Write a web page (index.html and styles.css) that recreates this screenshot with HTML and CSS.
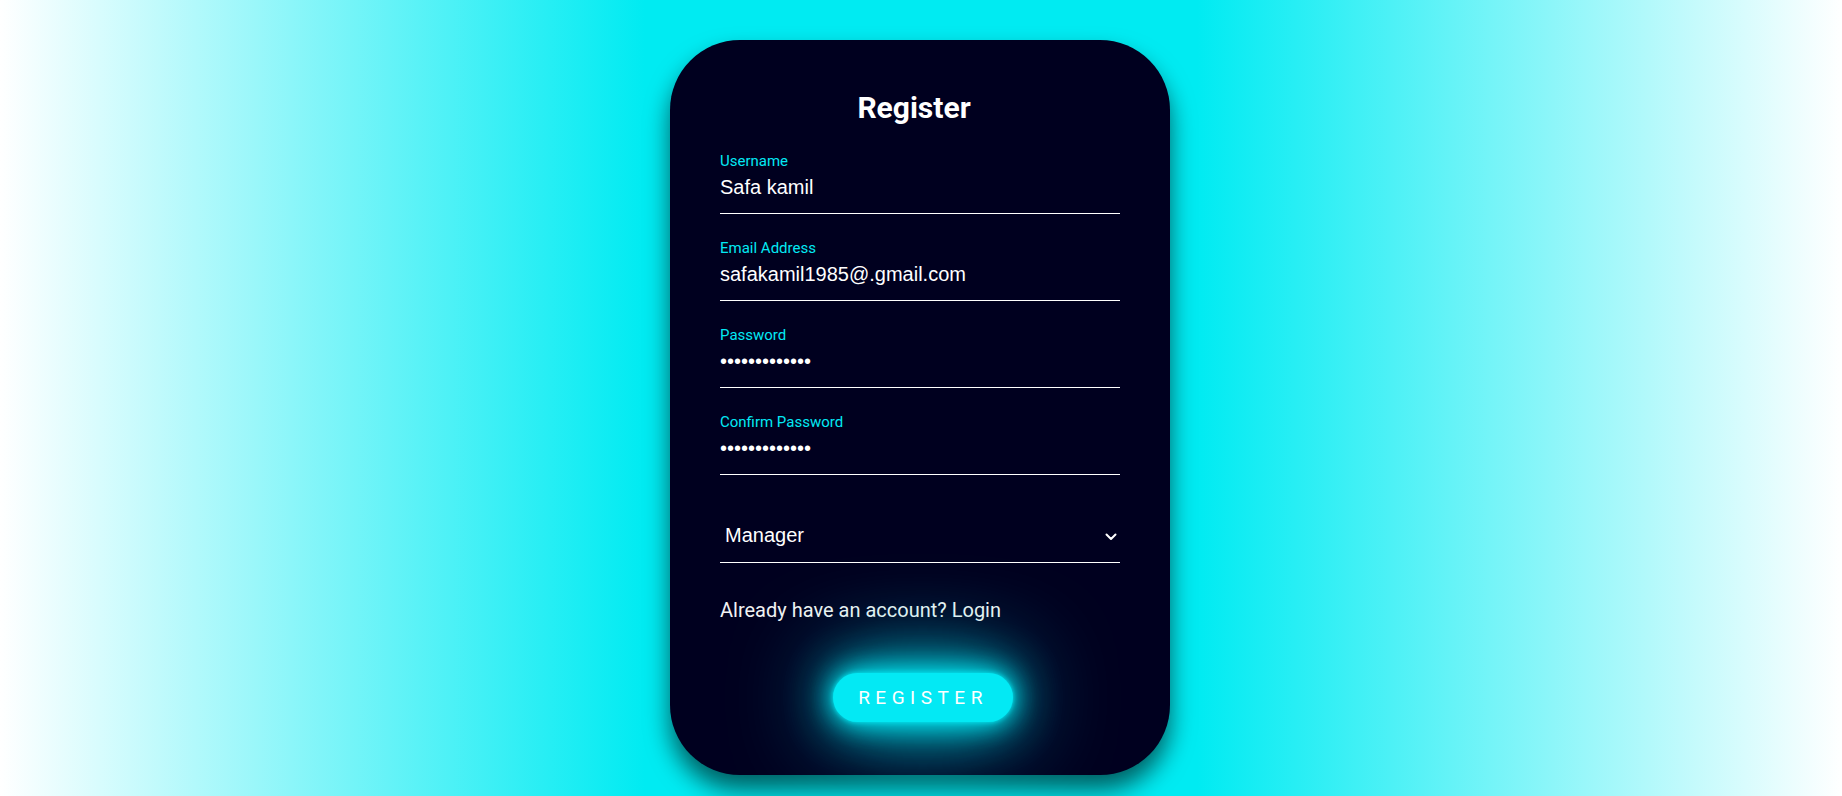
FILE: index.html
```html
<!DOCTYPE html>
<html lang="en">
<head>
<meta charset="utf-8">
<title>Register</title>
<link rel="stylesheet" href="styles.css">
</head>
<body>
  <main class="page">
    <form class="card">
      <h2 class="title">Register</h2>
      <div class="field">
        <label class="label">Username</label>
        <input class="input" type="text" value="Safa kamil">
      </div>
      <div class="field">
        <label class="label">Email Address</label>
        <input class="input" type="text" value="safakamil1985@.gmail.com">
      </div>
      <div class="field">
        <label class="label">Password</label>
        <input class="input" type="password" value="safakamil1234">
      </div>
      <div class="field">
        <label class="label">Confirm Password</label>
        <input class="input" type="password" value="safakamil1234">
      </div>
      <div class="select-wrap">
        <select class="select">
          <option>Manager</option>
          <option>Employee</option>
        </select>
        <svg class="chevron" width="12" height="8" viewBox="0 0 12 8"><path d="M1.5 1.5 L6 6 L10.5 1.5" fill="none" stroke="#fff" stroke-width="2" stroke-linecap="round" stroke-linejoin="round"/></svg>
      </div>
      <p class="switch">Already have an account? Login</p>
      <div class="actions">
        <button class="btn" type="button">REGISTER</button>
      </div>
    </form>
  </main>
</body>
</html>
```

FILE: styles.css
```css
html, body {
  margin: 0;
  padding: 0;
  height: 100%;
}
body {
  background: linear-gradient(90deg, #ffffff 0%, #00ebf2 35%, #00ebf2 65%, #ffffff 100%);
  font-family: Roboto, "Liberation Sans", Arial, sans-serif;
  overflow: hidden;
}
.page {
  display: flex;
  justify-content: center;
  padding: 40px 2px 0 0;
}
.card {
  box-sizing: border-box;
  width: 500px;
  height: 735px;
  background: #00001f;
  border-radius: 70px;
  box-shadow: 0 15px 25px rgba(0, 0, 0, 0.6);
  padding: 51px 50px 0 50px;
  display: flex;
  flex-direction: column;
}
.title {
  margin: 0 12px 27px 0;
  text-align: center;
  color: #fff;
  font-size: 30px;
  font-weight: 700;
  line-height: 34px;
}
.field {
  display: flex;
  flex-direction: column;
  margin-bottom: 25px;
}
.label {
  color: #03e9f4;
  font-size: 15px;
  line-height: 18px;
}
.input {
  box-sizing: content-box;
  background: transparent;
  border: none;
  border-bottom: 1px solid #fff;
  outline: none;
  color: #fff;
  font-family: "Liberation Sans", Arial, sans-serif;
  font-size: 20px;
  line-height: 23px;
  height: 23px;
  padding: 6px 0 14px 0;
  margin: 0;
}
.select-wrap {
  position: relative;
}
.select {
  appearance: none;
  -webkit-appearance: none;
  display: block;
  box-sizing: border-box;
  width: 100%;
  height: 63px;
  padding: 8px 5px 0 5px;
  background: transparent;
  border: none;
  border-bottom: 1px solid #fff;
  border-radius: 0;
  outline: none;
  color: #fff;
  font-family: "Liberation Sans", Arial, sans-serif;
  font-size: 20px;
}
.select option {
  color: #000;
}
.chevron {
  position: absolute;
  right: 3px;
  top: 33px;
  pointer-events: none;
}
.switch {
  margin: 35px 0 0 0;
  color: #f2f2f2;
  font-size: 20px;
  line-height: 24px;
}
.actions {
  display: flex;
  justify-content: center;
  margin-top: 51px;
  padding-left: 6px;
}
.btn {
  width: 180px;
  height: 49px;
  border: none;
  border-radius: 25px;
  background: #03e9f4;
  color: #fff;
  font-family: Roboto, sans-serif;
  font-size: 19px;
  letter-spacing: 5.5px;
  padding: 0;
  box-shadow: 0 0 5px #03e9f4, 0 0 25px #03e9f4, 0 0 50px #03e9f4, 0 0 100px #03e9f4;
  cursor: pointer;
}
```
